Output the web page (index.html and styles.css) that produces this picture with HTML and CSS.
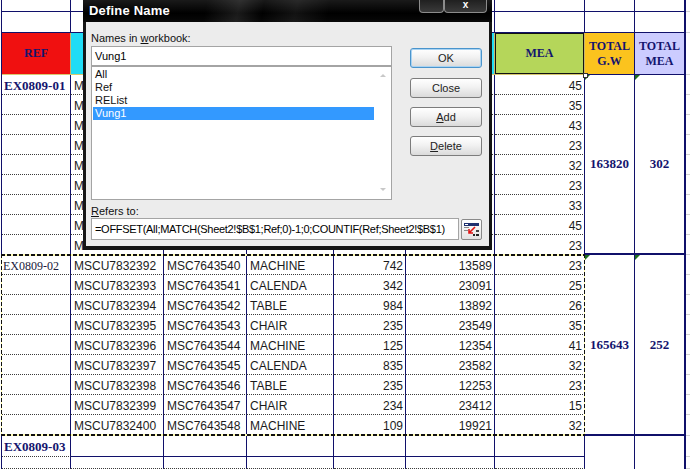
FILE: index.html
```html
<!DOCTYPE html>
<html>
<head>
<meta charset="utf-8">
<link rel="stylesheet" href="styles.css">
</head>
<body>
<div class="sheet">
  <!-- row 1 -->
  <div class="c t"></div><div class="c t"></div><div class="c t"></div><div class="c t"></div><div class="c t"></div><div class="c t"></div><div class="c t"></div><div class="c t"></div><div class="c t ci"></div><div class="c j"></div>
  <!-- row 2 -->
  <div class="c t"></div><div class="c t"></div><div class="c t"></div><div class="c t"></div><div class="c t"></div><div class="c t"></div><div class="c t"></div><div class="c t"></div><div class="c t ci"></div><div class="c j"></div>
  <!-- header -->
  <div class="c h ref">REF</div><div class="c h cy"></div><div class="c h cy"></div><div class="c h cy"></div><div class="c h cy"></div><div class="c h cy"></div><div class="c h mea">MEA</div><div class="c h gw">TOTAL<br>G.W</div><div class="c h tm ci">TOTAL<br>MEA</div><div class="c j"></div>

  <!-- group 1 (mostly under the dialog) -->
  <div class="c a">EX0809-01</div><div class="c">M</div><div class="c"></div><div class="c"></div><div class="c n"></div><div class="c n"></div><div class="c n">45</div><div class="c tot">163820</div><div class="c tot ci">302</div><div class="c j"></div>
  <div class="c"></div><div class="c">M</div><div class="c"></div><div class="c"></div><div class="c n"></div><div class="c n"></div><div class="c n">35</div><div class="c j"></div>
  <div class="c"></div><div class="c">M</div><div class="c"></div><div class="c"></div><div class="c n"></div><div class="c n"></div><div class="c n">43</div><div class="c j"></div>
  <div class="c"></div><div class="c">M</div><div class="c"></div><div class="c"></div><div class="c n"></div><div class="c n"></div><div class="c n">23</div><div class="c j"></div>
  <div class="c"></div><div class="c">M</div><div class="c"></div><div class="c"></div><div class="c n"></div><div class="c n"></div><div class="c n">32</div><div class="c j"></div>
  <div class="c"></div><div class="c">M</div><div class="c"></div><div class="c"></div><div class="c n"></div><div class="c n"></div><div class="c n">23</div><div class="c j"></div>
  <div class="c"></div><div class="c">M</div><div class="c"></div><div class="c"></div><div class="c n"></div><div class="c n"></div><div class="c n">33</div><div class="c j"></div>
  <div class="c"></div><div class="c">M</div><div class="c"></div><div class="c"></div><div class="c n"></div><div class="c n"></div><div class="c n">45</div><div class="c j"></div>
  <div class="c gl"></div><div class="c gl">M</div><div class="c gl"></div><div class="c gl"></div><div class="c gl n"></div><div class="c gl n"></div><div class="c gl n">23</div><div class="c j"></div>

  <!-- group 2 -->
  <div class="c a2">EX0809-02</div><div class="c">MSCU7832392</div><div class="c">MSC7643540</div><div class="c">MACHINE</div><div class="c n">742</div><div class="c n">13589</div><div class="c n">23</div><div class="c tot">165643</div><div class="c tot ci">252</div><div class="c j"></div>
  <div class="c"></div><div class="c">MSCU7832393</div><div class="c">MSC7643541</div><div class="c">CALENDA</div><div class="c n">342</div><div class="c n">23091</div><div class="c n">25</div><div class="c j"></div>
  <div class="c"></div><div class="c">MSCU7832394</div><div class="c">MSC7643542</div><div class="c">TABLE</div><div class="c n">984</div><div class="c n">13892</div><div class="c n">26</div><div class="c j"></div>
  <div class="c"></div><div class="c">MSCU7832395</div><div class="c">MSC7643543</div><div class="c">CHAIR</div><div class="c n">235</div><div class="c n">23549</div><div class="c n">35</div><div class="c j"></div>
  <div class="c"></div><div class="c">MSCU7832396</div><div class="c">MSC7643544</div><div class="c">MACHINE</div><div class="c n">125</div><div class="c n">12354</div><div class="c n">41</div><div class="c j"></div>
  <div class="c"></div><div class="c">MSCU7832397</div><div class="c">MSC7643545</div><div class="c">CALENDA</div><div class="c n">835</div><div class="c n">23582</div><div class="c n">32</div><div class="c j"></div>
  <div class="c"></div><div class="c">MSCU7832398</div><div class="c">MSC7643546</div><div class="c">TABLE</div><div class="c n">235</div><div class="c n">12253</div><div class="c n">23</div><div class="c j"></div>
  <div class="c"></div><div class="c">MSCU7832399</div><div class="c">MSC7643547</div><div class="c">CHAIR</div><div class="c n">234</div><div class="c n">23412</div><div class="c n">15</div><div class="c j"></div>
  <div class="c gl"></div><div class="c gl">MSCU7832400</div><div class="c gl">MSC7643548</div><div class="c gl">MACHINE</div><div class="c gl n">109</div><div class="c gl n">19921</div><div class="c gl n">32</div><div class="c j"></div>

  <!-- group 3 -->
  <div class="c a">EX0809-03</div><div class="c s"></div><div class="c s"></div><div class="c s"></div><div class="c s"></div><div class="c s"></div><div class="c s"></div><div class="c tot2"></div><div class="c tot2 ci"></div><div class="c j"></div>
  <div class="c"></div><div class="c"></div><div class="c"></div><div class="c"></div><div class="c"></div><div class="c"></div><div class="c"></div><div class="c j"></div>
</div>

<div class="marquee"></div>

<div class="dialog">
  <div class="titlebar">
    <span class="title">Define Name</span>
    <div class="tbtns"><span class="tb"></span><span class="tb tbx">x</span></div>
  </div>
  <div class="dbody">
    <div class="topsec">
      <div class="left">
        <div class="lbl">Names in <u>w</u>orkbook:</div>
        <div class="inp">Vung1</div>
        <div class="list">
          <div class="items">
            <div class="it">All</div>
            <div class="it">Ref</div>
            <div class="it">REList</div>
            <div class="it sel">Vung1</div>
          </div>
          <div class="sb"><span class="ar up"></span><span class="ar dn"></span></div>
        </div>
      </div>
      <div class="btns">
        <div class="btn ok">OK</div>
        <div class="btn">Close</div>
        <div class="btn"><u>A</u>dd</div>
        <div class="btn"><u>D</u>elete</div>
      </div>
    </div>
    <div class="lbl rlbl"><u>R</u>efers to:</div>
    <div class="frow">
      <div class="inp finp">=OFFSET(All;MATCH(Sheet2!$B$1;Ref;0)-1;0;COUNTIF(Ref;Sheet2!$B$1)</div>
      <div class="colbtn">
        <svg width="15" height="13" viewBox="0 0 15 13">
          <rect x="0" y="0" width="15" height="3" fill="#1d2f6e"/>
          <rect x="1" y="1" width="3" height="1" fill="#fff"/>
          <rect x="0" y="4" width="5" height="1" fill="#8a8a8a"/>
          <rect x="0" y="7" width="4" height="1" fill="#8a8a8a"/>
          <path d="M11 4 L5.5 9.5 M5 6 L5 10 L9 10" stroke="#e01414" stroke-width="1.6" fill="none"/>
          <rect x="9" y="11" width="2" height="2" fill="#222"/>
          <rect x="12" y="11" width="3" height="2" fill="#222"/>
          <rect x="12" y="7" width="3" height="2" fill="#444"/>
        </svg>
      </div>
    </div>
  </div>
</div>
</body>
</html>
```

FILE: styles.css
```css
html, body {
  margin: 0;
  padding: 0;
}
body {
  width: 690px;
  height: 469px;
  overflow: hidden;
  position: relative;
  background: #fff;
  font-family: "Liberation Sans", Arial, sans-serif;
}

/* ---------- spreadsheet ---------- */
.sheet {
  display: grid;
  grid-template-columns: 69px 93px 83px 87px 72px 89px 90px 50px 51px 4px;
  grid-template-rows: 12px 21px 42px repeat(9, 20px) repeat(8, 20px) 21px 21px 12px;
  margin-left: 1px;
  border-left: 1px solid #10106a;
  width: max-content;
  font-size: 12px;
  color: #1b1b1b;
}
.c {
  box-sizing: border-box;
  border-right: 1px solid #10106a;
  border-bottom: 1px dotted #3a3a3a;
  padding: 3px 3px 0;
  line-height: 16px;
  white-space: nowrap;
  overflow: hidden;
}
.t { border-bottom: 1px solid #10106a; }
.s { border-bottom: 1px solid #10106a; }
.gl { border-bottom: 1px solid #10106a; }
.n { text-align: right; padding-right: 2px; }
.a {
  font: bold 13px/16px "Liberation Serif", "Times New Roman", serif;
  color: #14146e;
  padding-left: 2px;
}
.a2 {
  font: 12px/16px "Liberation Serif", "Times New Roman", serif;
  color: #1a1a3a;
  padding-left: 1px;
}

.h {
  display: flex;
  align-items: center;
  justify-content: center;
  text-align: center;
  padding: 0;
  font: bold 12px/15px "Liberation Serif", "Times New Roman", serif;
  color: #14146e;
  border-right-color: #c9b66c;
  border-bottom: 1px solid #d8c870;
}
.ref { background: #f01010; }
.cy { background: #20dcf5; }
.mea {
  background: #b5d65a;
  box-shadow: inset 0 0 0 1px #111;
  position: relative;
  overflow: visible;
  z-index: 2;
}
.mea::after {
  content: "";
  position: absolute;
  right: -4px;
  bottom: -4px;
  width: 5px;
  height: 5px;
  background: #fff;
  border: 1px solid #333;
  box-sizing: border-box;
}
.gw { background: #fbc31e; border-right-color: #10106a; border-bottom-color: #10106a; }
.tm { background: #ccccff; border-bottom-color: #10106a; }

.tot {
  grid-row: span 9;
  border-bottom: 2px solid #10106a;
  display: flex;
  align-items: center;
  justify-content: center;
  padding: 0;
  font: bold 13px "Liberation Serif", "Times New Roman", serif;
  color: #14146e;
  position: relative;
}
.tot::before {
  content: "";
  position: absolute;
  left: 0;
  top: 0;
  border-top: 5px solid #1e6e1e;
  border-right: 5px solid transparent;
}
.tot2 {
  grid-row: span 2;
  border-bottom: 0;
}
.ci { border-right: 2px solid #10106a; }
.j {
  border-right: 0;
  border-bottom: 1px solid #d4d4d4;
}

/* copy marquee around EX0809-02 block */
.marquee {
  position: absolute;
  left: 1px;
  top: 254px;
  width: 584px;
  height: 182px;
  pointer-events: none;
  background:
    repeating-linear-gradient(90deg, #111 0 4px, #fffbb0 4px 6px) top / 100% 2px no-repeat,
    repeating-linear-gradient(90deg, #111 0 4px, #fffbb0 4px 6px) bottom / 100% 2px no-repeat,
    repeating-linear-gradient(180deg, #111 0 4px, #fffbb0 4px 6px) left / 1px 100% no-repeat,
    repeating-linear-gradient(180deg, #111 0 4px, #fffbb0 4px 6px) right / 1px 100% no-repeat;
}

/* ---------- dialog ---------- */
.dialog {
  position: absolute;
  left: 83px;
  top: 0;
  width: 409px;
  height: 250px;
  background: #151515;
  display: flex;
  flex-direction: column;
  font: 11px "Liberation Sans", Arial, sans-serif;
  color: #000;
  z-index: 5;
}
.titlebar {
  height: 22px;
  flex: none;
  display: flex;
  align-items: flex-start;
  background:
    linear-gradient(100deg, rgba(255,255,255,0) 30%, rgba(255,255,255,0.10) 38%, rgba(255,255,255,0) 44%, rgba(255,255,255,0.07) 52%, rgba(255,255,255,0) 60%),
    linear-gradient(#1a1a1a, #000 60%, #080808);
}
.title {
  color: #fff;
  font-weight: bold;
  font-size: 13px;
  line-height: 22px;
  padding-left: 6px;
  letter-spacing: 0.2px;
}
.tbtns {
  margin-left: auto;
  margin-right: 5px;
  display: flex;
}
.tb {
  width: 25px;
  height: 13px;
  box-sizing: border-box;
  border: 1px solid #8c8c8c;
  border-top: 0;
  border-radius: 0 0 4px 4px;
  background: linear-gradient(#202020, #3a3a3a);
}
.tbx {
  width: 43px;
  color: #fff;
  font-size: 10px;
  font-weight: bold;
  text-align: center;
  line-height: 9px;
}
.dbody {
  flex: 1;
  margin: 0 3px 4px;
  background: #ececec;
  padding: 10px 6px 6px 5px;
  display: flex;
  flex-direction: column;
}
.lbl {
  line-height: 13px;
  height: 13px;
  color: #111;
}
.rlbl { margin-top: 5px; }
.topsec { display: flex; }
.left {
  width: 301px;
  display: flex;
  flex-direction: column;
}
.inp {
  margin-top: 1px;
  height: 20px;
  box-sizing: border-box;
  border: 1px solid #a4a4a4;
  background: #fff;
  padding: 0 3px;
  line-height: 18px;
  white-space: nowrap;
  overflow: hidden;
}
.list {
  height: 134px;
  box-sizing: border-box;
  border: 1px solid #a4a4a4;
  background: #fff;
  display: flex;
}
.items {
  flex: 1;
  padding: 1px 0 0 1px;
}
.it {
  height: 13px;
  line-height: 13px;
  padding-left: 2px;
  color: #111;
}
.sel { background: #3399ff; color: #fff; }
.sb {
  width: 17px;
  display: flex;
  flex-direction: column;
  justify-content: space-between;
  align-items: center;
  padding: 7px 0 8px;
}
.ar {
  width: 0;
  height: 0;
  border-left: 3px solid transparent;
  border-right: 3px solid transparent;
}
.up { border-bottom: 3px solid #c8c8c8; }
.dn { border-top: 3px solid #c8c8c8; }

.btns {
  margin-left: 18px;
  padding-top: 16px;
  display: flex;
  flex-direction: column;
  gap: 9px;
}
.btn {
  width: 72px;
  height: 20px;
  box-sizing: border-box;
  border: 1px solid #7c7c7c;
  border-radius: 3px;
  background: linear-gradient(#ffffff, #f2f2f2 45%, #dadada);
  text-align: center;
  line-height: 18px;
  color: #222;
}
.ok {
  border-color: #4a94cc;
  box-shadow: inset 0 0 0 1px #a9d3f2;
  margin-bottom: 1px;
}
.frow {
  display: flex;
  align-items: center;
}
.finp {
  width: 368px;
  height: 22px;
  line-height: 20px;
  margin: 0;
  padding-left: 3px;
  flex: none;
  letter-spacing: -0.3px;
}
.colbtn {
  width: 21px;
  height: 21px;
  margin-left: 2px;
  box-sizing: border-box;
  border: 1px solid #8a8a8a;
  border-radius: 2px;
  background: linear-gradient(#ffffff, #e2e2e2);
  display: flex;
  align-items: center;
  justify-content: center;
}
```
